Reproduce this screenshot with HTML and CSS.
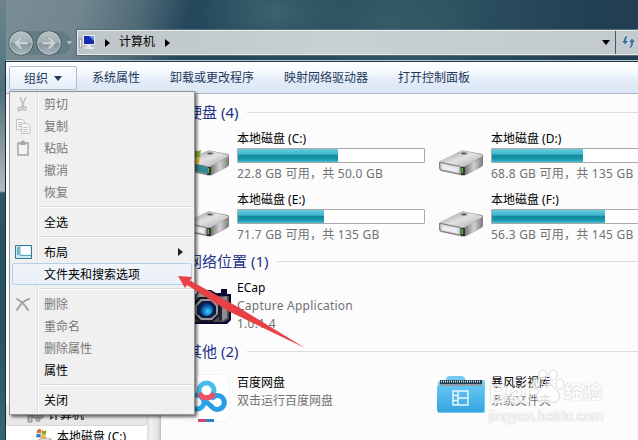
FILE: index.html
```html
<!DOCTYPE html>
<html lang="zh-CN">
<head>
<meta charset="utf-8">
<title>计算机</title>
<link rel="stylesheet" href="styles.css">
</head>
<body>
<svg class="defs" width="0" height="0">
  <defs>
    <linearGradient id="top" x1="0" y1="0" x2="1" y2="1"><stop offset="0" stop-color="#8d8d8d"/><stop offset=".5" stop-color="#e2e2e2"/><stop offset="1" stop-color="#a9a9a9"/></linearGradient>
    <linearGradient id="side" x1="0" y1="0" x2="1" y2="0"><stop offset="0" stop-color="#777"/><stop offset=".5" stop-color="#d2d2d2"/><stop offset="1" stop-color="#777"/></linearGradient>
    <linearGradient id="folder" x1="0" y1="0" x2="0" y2="1"><stop offset="0" stop-color="#64c5f2"/><stop offset="1" stop-color="#36a4e0"/></linearGradient>
    <radialGradient id="lens" cx=".6" cy=".65" r=".6"><stop offset="0" stop-color="#35d8f4"/><stop offset=".55" stop-color="#1679c4"/><stop offset="1" stop-color="#082a70"/></radialGradient>
    <linearGradient id="orb" x1="0" y1="0" x2="0" y2="1"><stop offset="0" stop-color="#b9c3c6"/><stop offset=".48" stop-color="#a3afb3"/><stop offset=".52" stop-color="#83949a"/><stop offset="1" stop-color="#a9b7bb"/></linearGradient>
    <symbol id="drive" viewBox="0 0 48 28">
      <path d="M2 13 24 2q2-1 5 0l16 3q2 1 1 3v7q0 2-2 3L29 26q-3 1-6 0L4 22q-2-1-2-3z" fill="#8b8b8b"/>
      <path d="M3 12 24 2q2-1 5 0l16 4q1 1-1 2L29 17q-3 1-6 0L4 13z" fill="url(#top)"/>
      <path d="M28 17 46 8v7q0 2-2 3L28 26z" fill="url(#side)"/>
      <path d="m3 13.500 20 4v7.500L4 21q-1-1-1-2z" fill="#dcdcdf" stroke="#777" stroke-width=".8"/>
      <path d="m6 16 14 3v4L6 20z" fill="#ececf2"/>
      <path d="M24 18h4v8h-4z" fill="#303532"/><path d="M24.500 19h1.500v5h-1.500z" fill="#54b833"/>
      <ellipse cx="27" cy="4.500" rx="3" ry="1" fill="#555"/>
    </symbol>
    <symbol id="flag" viewBox="0 0 20 20">
      <path d="M2 4q4-4 8-1l-1 7Q5 7 1 11z" fill="#d96b32"/><path d="M11 4q4 3 8 0l-1 7q-4 3-8 0z" fill="#8ca332"/><path d="M1 12q4-3 8 0l-1 6q-4-3-8 0z" fill="#3979bd"/><path d="M10 12q4 3 8 0l-1 6q-4 3-8 0z" fill="#e5b633"/>
    </symbol>
  </defs>
</svg>
<div class="window">
  <header class="titlebar">
    <svg class="orbs" width="70" height="30" viewBox="0 0 70 30">
      <path d="M14 3h38a11 11 0 0 1 0 24H14z" fill="#5d747d" opacity=".65"/>
      <circle cx="14" cy="15" r="12.500" fill="#455b64"/><circle cx="14" cy="15" r="11.300" fill="url(#orb)" stroke="#bdc9cd"/>
      <circle cx="42" cy="15" r="12.500" fill="#455b64"/><circle cx="42" cy="15" r="11.300" fill="url(#orb)" stroke="#bdc9cd"/>
      <path d="m7 15 6-6h3l-3.500 4.500H21v3h-8.500L16 21h-3zM49 15l-6-6h-3l3.500 4.500H35v3h8.500L40 21h3z" fill="#c8d1d4" stroke="#8d9ca2" stroke-width=".5"/>
      <path d="M59.500 13h6l-3 4z" fill="#a7bac2"/>
    </svg>
    <div class="address">
      <svg class="pc" width="17" height="15" viewBox="0 0 17 15"><path d="M0 3h3v10H0z" fill="#a5acb0"/><path d="M1 5h1v7H1z" fill="#eee"/><path d="M4 0h12v10H4z" fill="#e5e8ee"/><path d="M5 1h10v8H5z" fill="#162aaa"/><path d="M10 1h5v5z" fill="#6792ef"/><path d="M8 10h4v2h3v2H6v-2h2z" fill="#e2e6e8"/></svg>
      <svg class="crumb" width="5" height="8" viewBox="0 0 5 8"><path d="M0 0v8l5-4z"/></svg>
      <span class="path">计算机</span>
      <svg class="crumb last" width="5" height="8" viewBox="0 0 5 8"><path d="M0 0v8l5-4z"/></svg>
      <svg class="drop" width="8" height="5" viewBox="0 0 8 5"><path d="M0 0h8L4 5z"/></svg>
      <div class="refresh"><svg width="15" height="14" viewBox="0 0 15 14"><g stroke="#f2f6f8" stroke-width=".6" fill="#42749c"><path d="M7.500 1Q2.500 0 2.500 5.500H0L4.200 10 8 5.500H5.500q0-3 2-4.500z"/><path d="M7.500 13.500q5 0 5-6H15L11 3 7 7.500h2.500q0 4-2 6z"/></g></svg></div>
    </div>
  </header>
  <div class="frame">
    <nav class="toolbar">
      <span class="tool open">组织<svg width="8" height="5" viewBox="0 0 8 5"><path d="M0 0h8L4 5z" fill="#1e395b"/></svg></span>
      <span class="tool">系统属性</span><span class="tool">卸载或更改程序</span><span class="tool">映射网络驱动器</span><span class="tool">打开控制面板</span>
    </nav>
    <div class="panes">
      <aside class="tree">
        <div class="node selected"><svg width="17" height="15" viewBox="0 0 17 15"><path d="M1 2h4v12H1zM6 1h10v9H6zM9 10h4v3H9z" fill="#bbb" stroke="#888"/></svg>计算机</div>
        <div class="node child"><svg width="17" height="19" viewBox="0 0 17 19"><use href="#drive" x="0" y="8" width="17" height="11"/><use href="#flag" x="1" y="0" width="11" height="11"/></svg>本地磁盘 (C:)</div>
      </aside>
      <div class="splitter"></div>
      <main class="content">
        <h2>硬盘 (4)</h2>
        <section class="items drives">
          <article class="item"><div class="icon"><svg width="48" height="32" viewBox="0 0 48 32"><use href="#drive" y="3" width="48" height="28"/><use href="#flag" x="0" y="0" width="19" height="19"/><path d="m3 16 22 5v7L3 23z" fill="#338894"/></svg></div><div class="info"><div class="name">本地磁盘 (C:)</div><div class="bar"><i class="fill" style="width:54%"></i></div><div class="sub size">22.8 GB 可用，共 50.0 GB</div></div></article>
          <article class="item"><div class="icon"><svg width="48" height="28"><use href="#drive" width="48" height="28"/></svg></div><div class="info"><div class="name">本地磁盘 (D:)</div><div class="bar"><i class="fill" style="width:49%"></i></div><div class="sub size">68.8 GB 可用，共 135 GB</div></div></article>
          <article class="item"><div class="icon"><svg width="48" height="28"><use href="#drive" width="48" height="28"/></svg></div><div class="info"><div class="name">本地磁盘 (E:)</div><div class="bar"><i class="fill" style="width:46.5%"></i></div><div class="sub size">71.7 GB 可用，共 135 GB</div></div></article>
          <article class="item"><div class="icon"><svg width="48" height="28"><use href="#drive" width="48" height="28"/></svg></div><div class="info"><div class="name">本地磁盘 (F:)</div><div class="bar"><i class="fill" style="width:61%"></i></div><div class="sub size">56.3 GB 可用，共 145 GB</div></div></article>
        </section>
        <h2>网络位置 (1)</h2>
        <section class="items network">
          <article class="item"><div class="icon"><svg width="48" height="38" viewBox="0 0 48 38">
            <path d="M5 7h9V3h14l5 3h5V2h6v5h4v26l-4 4H3V9z" fill="#0b0730"/><path d="M12 8 16 4h12l5 5h13v23l-5 3H10z" fill="#4d4d50"/><path d="M16 6h11l2 4H13zM37 11l7-2v22l-5 3z" fill="#8e8e90"/><path d="m36 12 3-1v22l-3 1z" fill="#252735"/><path d="M17 10h14l6 7v11l-7 7H16l-7-7V16z" fill="#171725"/><path d="M18 12h11l6 6v9l-6 6H18l-6-6v-9z" fill="#969899"/><path d="M19 14h9l5 5v8l-5 4h-9l-5-4v-8z" fill="#0d1d46"/><circle cx="23.500" cy="22.500" r="6.500" fill="url(#lens)"/>
          </svg></div><div class="info"><div class="name">ECap</div><div class="sub wide">Capture Application</div><div class="sub wide version">1.0.1.4</div></div></article>
        </section>
        <h2>其他 (2)</h2>
        <section class="items other">
          <article class="item"><div class="icon"><svg width="48" height="48" viewBox="0 0 48 48"><rect x=".5" y=".5" width="46" height="47" rx="7" fill="#fff" stroke="#f3f3f3"/>
            <g fill="none" stroke-width="5"><circle cx="14" cy="28" r="7" stroke="#28a8e8"/><path d="M28 25q4-5 9-3a7 7 0 1 1-8 11L18 23" stroke="#299de4"/><circle cx="23.500" cy="16.500" r="7.500" stroke="#48bbec"/><path d="M16.500 19a7.500 7.500 0 0 0 14 0" stroke="#ef4f67"/></g><path d="M15 45h8v3h-8z" fill="#d8446a"/><path d="M23 45h8v3h-8z" fill="#2a83cd"/></svg></div><div class="info"><div class="name">百度网盘</div><div class="sub">双击运行百度网盘</div></div></article>
          <article class="item"><div class="icon"><svg width="48" height="48" viewBox="0 0 48 48"><path d="M1 39V9q0-2 2-2h5l2-4q1-1 3-1h11q2 0 3 1l2 3h17q2 0 2 2v31z" fill="#75c9ee"/><path d="M3 6h42v7H3z" fill="#263f4e"/><path d="M4 7.500h40" stroke="#c4dce7" stroke-width="2" stroke-dasharray="1 1"/><path d="M3 11h42" stroke="#fff"/><path d="M0 12h47v24q0 2-2 2H2q-2 0-2-2z" fill="url(#folder)"/><path d="M16 17h15v14H16zM21 17v14M21 24h10M16 21.500h5M16 26.500h5" fill="none" stroke="#e8f7fd" stroke-width="1.500"/></svg></div><div class="info"><div class="name">暴风影视库</div><div class="sub">系统文件夹</div></div></article>
        </section>
      </main>
    </div>
  </div>
</div>
<div class="menu">
  <div class="entry off"><span class="glyph"><svg width="16" height="17" viewBox="0 0 16 17" fill="none" stroke="#b8b8b8" stroke-width="1.300"><path d="M5 1 9 11M11 1 6 12"/><circle cx="4.500" cy="13" r="1.700"/><circle cx="9.500" cy="12.500" r="1.700"/></svg></span>剪切</div>
  <div class="entry off"><span class="glyph"><svg width="16" height="17" viewBox="0 0 16 17" fill="#f7f7f7" stroke="#c4c4c4"><path d="M1.500 1.500h6l2 2v8h-8zM3 4.500h4M3 6.500h4M3 8.500h3"/><path d="M6.500 5.500h6l2.500 2.500v7.500H6.500zM8 9.500h5M8 11.500h5M8 13.500h5"/></svg></span>复制</div>
  <div class="entry off"><span class="glyph"><svg width="16" height="17" viewBox="0 0 16 17" fill="#f3f3f3" stroke="#a4a4a4"><path d="M3 3h10v12H3z" stroke-width="1.500"/><path d="M5.500 4.500v-2h1.500V1h2v1.500h1.500v2z" fill="#aaa"/></svg></span>粘贴</div>
  <div class="entry off"><span class="glyph"></span>撤消</div>
  <div class="entry off"><span class="glyph"></span>恢复</div>
  <div class="rule"></div>
  <div class="entry"><span class="glyph"></span>全选</div>
  <div class="rule"></div>
  <div class="entry"><span class="glyph"><svg width="17" height="15" viewBox="0 0 17 15"><path d="M.5.5h16v13H.5z" fill="#c7eaf5" stroke="#377995"/><path d="M5 1.500h10.500v8H5z" fill="#fff"/><path d="M5 1v9.500h11" fill="none" stroke="#62a0b5"/><path d="M2 2h2v8H2z" fill="#68b3cd"/></svg></span>布局<svg class="sub-arrow" width="5" height="8" viewBox="0 0 5 8"><path d="M0 0v8l5-4z" fill="#222"/></svg></div>
  <div class="entry hover"><span class="glyph"></span>文件夹和搜索选项</div>
  <div class="rule"></div>
  <div class="entry off"><span class="glyph"><svg width="16" height="15" viewBox="0 0 16 15" fill="none" stroke="#a3a3a3" stroke-width="2" stroke-linecap="round"><path d="M2 2q7 4 11 11M14 2Q7 4 2 13"/></svg></span>删除</div>
  <div class="entry off"><span class="glyph"></span>重命名</div>
  <div class="entry off"><span class="glyph"></span>删除属性</div>
  <div class="entry"><span class="glyph"></span>属性</div>
  <div class="rule"></div>
  <div class="entry"><span class="glyph"></span>关闭</div>
</div>
<svg class="pointer" width="130" height="76" viewBox="0 0 130 76"><path d="M0 0 14 1 12 4.500 60 31 127 72 50 35 9 9 7 12z" fill="#e84145"/></svg>
<div class="watermark">
  <div class="brand"><span>Bai</span><svg width="34" height="36" viewBox="0 0 34 36" fill="#fff" stroke="#d0d0d0"><ellipse cx="5" cy="15" rx="4" ry="5"/><ellipse cx="12" cy="6" rx="4" ry="5"/><ellipse cx="22" cy="6" rx="4" ry="5"/><ellipse cx="29" cy="15" rx="4" ry="5"/><path d="M17 14q4 0 7 6 6 4 4 10-2 5-11 3-9 2-11-3-2-6 4-10 3-6 7-6z"/></svg><span class="cn">经验</span></div>
  <div class="site">jingyan.baidu.com</div>
</div>
</body>
</html>
```
FILE: styles.css
```css
* { box-sizing: border-box; }
body {
  margin: 0;
  width: 638px;
  height: 440px;
  overflow: hidden;
  position: relative;
  font: 12px/18px "Noto Sans", "Noto Sans CJK SC", sans-serif;
  color: #000;
  white-space: nowrap;
}
svg { display: block; flex: none; }
.defs { position: absolute; }
.window {
  width: 638px;
  height: 440px;
  overflow: hidden;
  display: flex;
  flex-direction: column;
  background:
    linear-gradient(#6d838b, #587a84 60px, #4d707b 90px, #8b9b9f 150px, #b4bcbf 191px, #2c5661 193px, #28535f 330px, #356773) 0 60px / 6px 440px no-repeat,
    radial-gradient(ellipse 75px 50px at 275px 12px, #3b636d, transparent),
    radial-gradient(ellipse 90px 60px at 390px 20px, #355b66, transparent),
    linear-gradient(105deg, #7b8e95 0, #71868e 80px, #526c79 135px, #26485c 185px, #25485b 280px, #2d5361 430px, #213e52 590px, #263d50);
  background-position: 0 0, 0 0, 0 0, 0 0;
}
.titlebar { height: 60px; padding: 28px 0 0 7px; display: flex; }
.address {
  flex: 1;
  height: 25px;
  margin-top: 2px;
  display: flex;
  align-items: center;
  background: linear-gradient(90deg, #bdc5c7, #c9d0d2 45%, #c2cacd);
  border: 1px solid #e6eaeb;
  border-right: 0;
  outline: 1px solid #566d77;
  padding-left: 2px;
}
.pc { margin-left: -1px; }
.crumb { margin: 0 9px; }
.crumb.last { margin-left: 10px; }
.path { width: 36px; line-height: 17px; margin-top: -2px; }
.drop { margin-left: auto; margin-right: 5px; }
.refresh { width: 23px; height: 23px; margin-left: 0; border-left: 1px solid #465861; padding: 4px 0 0 5px; }
.frame {
  flex: 1;
  min-height: 0;
  margin-left: 5px;
  border-left: 1px solid #172c40;
  border-top: 1px solid #b7c7cf;
  display: flex;
  flex-direction: column;
  background: #fcfcfd;
}
.toolbar {
  height: 33px;
  display: flex;
  padding: 4px 0 0 3px;
  color: #1e395b;
  background: linear-gradient(#fff, #f5f9fe 35%, #e4edf8 55%, #dce6f5);
  border-top: 1px solid #223747;
  border-bottom: 1px solid #a7b5c7;
}
.tool { margin-right: 30px; height: 24px; line-height: 23px; }
.tool.open {
  width: 68px;
  margin-right: 15px;
  padding-left: 14px;
  display: flex;
  align-items: center;
  gap: 6px;
  border: 1px solid #acbdd0;
  border-radius: 2px;
  background: linear-gradient(#fcfdff, #e5edf8);
}
.panes { flex: 1; min-height: 0; display: flex; }
.tree { width: 141px; padding-top: 312px; background: #fff; }
.node { height: 22px; display: flex; align-items: center; padding-left: 20px; gap: 4px; }
.node.selected { height: 22px; margin-top: -2px; border: 1px solid #d9d9d9; border-radius: 3px; background: linear-gradient(#f8f8f8, #e5e5e5); }
.node.child { padding-left: 29px; gap: 5px; }
.splitter { width: 14px; background: linear-gradient(90deg, #ddd, #f1f1f1 25%, #e1e1e1 80%, #bbb); }
.content { flex: 1; min-width: 0; padding: 6px 0 0 23px; }
h2 {
  height: 25px;
  margin: 0 0 4px 3px;
  display: flex;
  align-items: center;
  gap: 9px;
  font-size: 15px;
  line-height: 25px;
  font-weight: 400;
  color: #1e3287;
}
h2::after { content: ""; flex: 1; height: 1px; background: #dcdce0; }
.items { display: grid; grid-template-columns: 254px 254px; }
.drives { grid-auto-rows: 61px; height: 120px; }
.network { height: 61px; }
.item { display: flex; min-width: 0; }
.icon { width: 48px; margin-right: 5px; }
.drives .icon { padding-top: 20px; margin: 0 6px 0 -1px; }
.drives .item:first-child .icon { padding-top: 17px; }
.network .icon { padding-top: 9px; margin: 0 6px 0 -1px; }
.other .item { padding-top: 6px; }
.other .icon { margin: 0 6px 0 -1px; }
.drives .name { line-height: 19px; }
.network .name { padding-top: 1px; }
.bar { width: 188px; height: 15px; padding: 0; border: 1px solid #aaa; border-radius: 1px; background: #fff; }
.fill { display: block; height: 13px; background: linear-gradient(#69cce0, #3bb5ca 40%, #16889d 50%, #1594aa 75%, #46bcd1); }
.sub { color: #717171; }
.size { line-height: 21px; letter-spacing: .24px; }
.wide { letter-spacing: .25px; }
.menu {
  position: absolute;
  left: 9px;
  top: 91px;
  width: 186px;
  height: 324px;
  padding: 1px 2px 2px;
  border: 1px solid #959595;
  background: linear-gradient(90deg, transparent 27px, #dedede 27px, #dedede 28px, #fff 28px, #fff 29px, transparent 29px) #f0f0f0;
  box-shadow: 2px 2px 3px rgba(0, 0, 0, .6);
}
.entry { height: 22px; line-height: 21px; display: flex; align-items: center; border: 1px solid transparent; border-radius: 2px; }
.entry.off { color: #777; }
.entry.hover { border-color: #b5d1ea; background: linear-gradient(#f1f5fa, #e8eff7); }
.glyph { width: 31px; padding-left: 2px; }
.sub-arrow { margin-left: auto; margin-right: 8px; }
.rule { height: 8px; margin-left: 28px; background: linear-gradient(transparent 3px, #dadada 3px, #dadada 4px, #fff 4px, #fff 5px, transparent 5px); }
.pointer { position: absolute; left: 178px; top: 276px; }
.watermark {
  position: absolute;
  left: 489px;
  top: 370px;
  color: #fff;
  opacity: .75;
  font-family: "Liberation Sans", "Noto Sans CJK SC", sans-serif;
  text-shadow: 0 0 1px #aaa, 0 0 1px #bbb;
}
.brand { height: 40px; display: flex; align-items: center; font-size: 27px; font-weight: 700; }
.brand span:first-child { margin-top: 8px; }
.brand svg { margin-top: -6px; }
.brand .cn { font-size: 19px; margin: 5px 0 0 -1px; }
.site { font-size: 14px; line-height: 13px; letter-spacing: .1px; }
```
